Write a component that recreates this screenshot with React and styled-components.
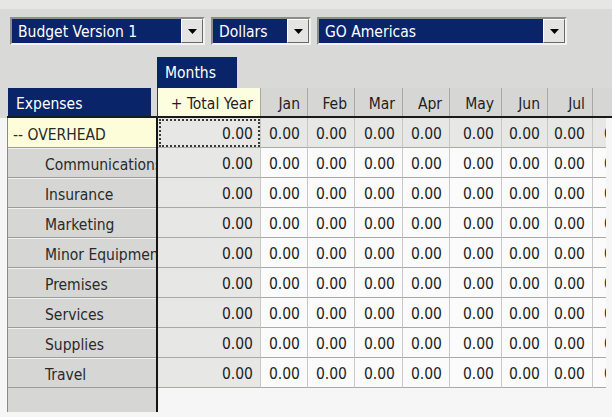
import React from "react";
import styled, { createGlobalStyle } from "styled-components";

const GlobalStyle = createGlobalStyle`
  html, body { margin: 0; padding: 0; }
  body {
    background: #f6f6f6;
    font-family: "DejaVu Sans Condensed", "DejaVu Sans", sans-serif;
    font-size: 15.5px;
    color: #222;
  }
`;

const Page = styled.div`
  width: 612px;
  height: 417px;
  overflow: hidden;
  background: #f6f6f6;
`;

const Top = styled.div`
  background: #d9d9d7;
  border-top: 9px solid #e6e6e4;
`;

const Toolbar = styled.div`
  display: flex;
  gap: 6px;
  padding: 8px 0 0 10px;
  height: 36px;
  box-sizing: border-box;
`;

const SelectBox = styled.div`
  display: flex;
  width: ${(p) => p.$w}px;
  height: 28px;
  box-sizing: border-box;
  border: 2px solid;
  border-color: #8c8c8c #f2f2f2 #f2f2f2 #8c8c8c;
`;

const SelectValue = styled.div`
  flex: 1;
  background: #0a246a;
  color: #fff;
  padding: 2px 0 0 6px;
  display: flex;
  align-items: center;
  white-space: nowrap;
  overflow: hidden;
`;

const ArrowButton = styled.div`
  width: 22px;
  box-sizing: border-box;
  background: #e4e4e2;
  border: 1px solid;
  border-color: #fbfbfb #6a6a6a #6a6a6a #fbfbfb;
  display: flex;
  align-items: center;
  justify-content: center;
`;

const TabRow = styled.div`
  display: flex;
  padding: 12px 0 0 157px;
`;

const Tab = styled.div`
  width: 80px;
  height: 31px;
  box-sizing: border-box;
  background: #0a246a;
  color: #fff;
  padding: 1px 0 0 8px;
  display: flex;
  align-items: center;
`;

const HeaderRow = styled.div`
  display: flex;
  height: 30px;
`;

const RowHeaderArea = styled.div`
  margin-left: 7px;
  width: 151px;
  box-sizing: border-box;
  border-right: 1px solid #3a3a3a;
  border-bottom: 2px solid #1a1a1a;
`;

const RowHeaderTitle = styled.div`
  margin-left: 1px;
  width: 143px;
  height: 28px;
  box-sizing: border-box;
  background: #0a246a;
  color: #fff;
  padding: 3px 0 0 8px;
  display: flex;
  align-items: center;
`;

const ColumnHeaders = styled.div`
  flex: 1;
  display: flex;
  overflow: hidden;
  border-bottom: 2px solid #1a1a1a;
`;

const HeaderCell = styled.div`
  flex: 0 0 ${(p) => p.$w}px;
  height: 28px;
  box-sizing: border-box;
  background: ${(p) => (p.$total ? "#fdfde0" : "#d6d6d4")};
  border-right: 1px solid #a9a9a7;
  padding: 3px 7px 0 0;
  display: flex;
  align-items: center;
  justify-content: flex-end;
  white-space: nowrap;
  color: #1e1e1e;
`;

const Body = styled.div`
  display: flex;
`;

const LabelPanel = styled.div`
  margin-left: 7px;
  width: 151px;
  height: 294px;
  box-sizing: border-box;
  background: #d6d6d4;
  border-left: 1px solid #8a8a8a;
  border-right: 2px solid #151515;
  overflow: hidden;
`;

const LabelCell = styled.div`
  height: 30px;
  box-sizing: border-box;
  background: ${(p) => (p.$group ? "#fdfdd9" : "#d6d6d4")};
  border-top: 1px solid ${(p) => (p.$group ? "#fdfdd9" : "#f0f0ee")};
  border-bottom: 1px solid #9c9c9a;
  padding: 3px 0 0 ${(p) => (p.$group ? 5 : 37)}px;
  display: flex;
  align-items: center;
  white-space: nowrap;
  color: #2a2a2a;
`;

const DataGrid = styled.div`
  width: 448px;
  overflow: hidden;
  align-self: flex-start;
`;

const DataRow = styled.div`
  display: flex;
`;

const DataCell = styled.div`
  flex: 0 0 ${(p) => p.$w}px;
  height: 30px;
  box-sizing: border-box;
  background: ${(p) => (p.$shade ? "#e7e7e6" : "#fbfbfb")};
  border-right: 1px solid #c8c8c6;
  border-bottom: 1px solid #a9a9a7;
  padding: 3px ${(p) => p.$pad}px 0 0;
  display: flex;
  align-items: center;
  justify-content: flex-end;
  color: #1e1e1e;
  outline: ${(p) => (p.$focus ? "2px dotted #3a3a3a" : "none")};
  outline-offset: -3px;
`;

const Caret = () => (
  <svg width="9" height="5" viewBox="0 0 9 5">
    <polygon points="0,0 9,0 4.5,5" fill="#000" />
  </svg>
);

const selects = [
  { label: "Budget Version 1", w: 195 },
  { label: "Dollars", w: 100 },
  { label: "GO Americas", w: 250 },
];

const columns = [
  { label: "+ Total Year", w: 103, total: true },
  { label: "Jan", w: 47 },
  { label: "Feb", w: 47 },
  { label: "Mar", w: 48 },
  { label: "Apr", w: 47 },
  { label: "May", w: 52 },
  { label: "Jun", w: 46 },
  { label: "Jul", w: 45 },
  { label: "Aug", w: 47, hidden: true },
];

const rows = [
  { label: "-- OVERHEAD", group: true },
  { label: "Communications" },
  { label: "Insurance" },
  { label: "Marketing" },
  { label: "Minor Equipment" },
  { label: "Premises" },
  { label: "Services" },
  { label: "Supplies" },
  { label: "Travel" },
];

export default function App() {
  return (
    <Page>
      <GlobalStyle />
      <Top>
        <Toolbar>
          {selects.map((s) => (
            <SelectBox key={s.label} $w={s.w}>
              <SelectValue>{s.label}</SelectValue>
              <ArrowButton>
                <Caret />
              </ArrowButton>
            </SelectBox>
          ))}
        </Toolbar>
        <TabRow>
          <Tab>Months</Tab>
        </TabRow>
        <HeaderRow>
          <RowHeaderArea>
            <RowHeaderTitle>Expenses</RowHeaderTitle>
          </RowHeaderArea>
          <ColumnHeaders>
            {columns.map((c) => (
              <HeaderCell key={c.label} $w={c.w} $total={c.total}>
                {c.hidden ? "" : c.label}
              </HeaderCell>
            ))}
          </ColumnHeaders>
        </HeaderRow>
      </Top>
      <Body>
        <LabelPanel>
          {rows.map((r) => (
            <LabelCell key={r.label} $group={r.group}>
              {r.label}
            </LabelCell>
          ))}
        </LabelPanel>
        <DataGrid>
          {rows.map((r, ri) => (
            <DataRow key={r.label}>
              {columns.map((c, ci) => (
                <DataCell
                  key={c.label}
                  $w={c.w}
                  $pad={c.hidden ? 4 : 7}
                  $shade={r.group || c.total}
                  $focus={ri === 0 && ci === 0}
                >
                  0.00
                </DataCell>
              ))}
            </DataRow>
          ))}
        </DataGrid>
      </Body>
    </Page>
  );
}
